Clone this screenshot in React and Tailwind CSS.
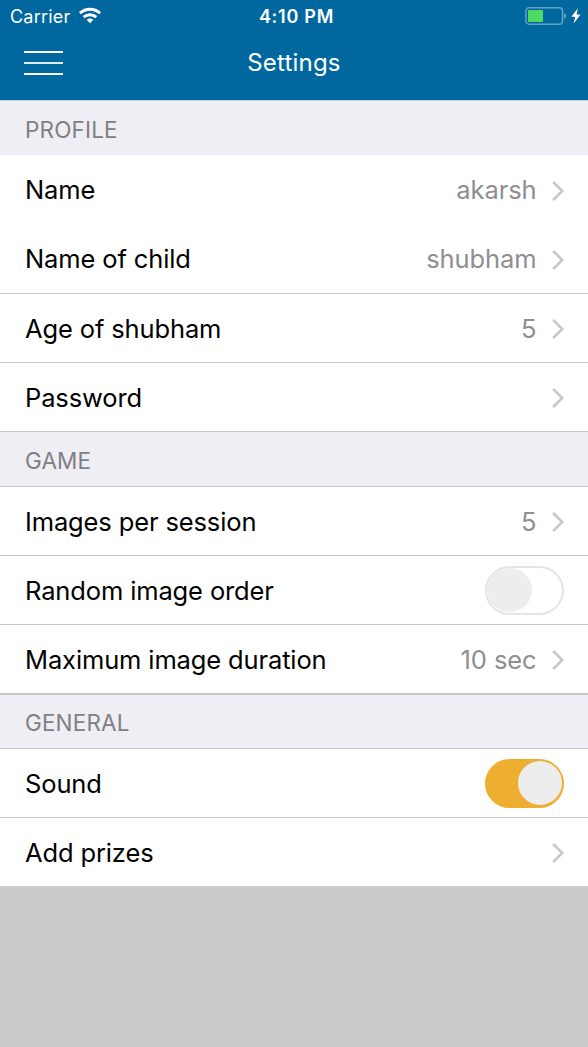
import React from "react";

function StatusBar() {
  return (
    <div className="grid h-8 grid-cols-3 items-center pl-[10px] pr-[7px] text-white">
      <div className="flex h-8 items-center gap-[9px]">
        <span className="pt-px text-[18px] leading-[31px] tracking-[0.2px]">Carrier</span>
        <svg className="-mt-px" width="22" height="17" viewBox="0 0 22 17" fill="none" stroke="#fff" strokeWidth="3">
          <path d="M1 6.2C6.5 0.9 15.5 0.9 21 6.2" />
          <path d="M4.7 10.2C8.2 6.9 13.8 6.9 17.3 10.2" />
          <path d="M7.7 12.8C9.6 11 12.4 11 14.3 12.8L11 16.2Z" fill="#fff" stroke="none" />
        </svg>
      </div>
      <span className="pt-px pl-[2px] text-center text-[18px] leading-[31px] font-semibold tracking-[0.75px]">4:10 PM</span>
      <div className="flex h-8 items-center justify-end gap-[4px]">
        <svg width="42" height="18" viewBox="0 0 42 18" fill="none">
          <rect x="0.9" y="0.7" width="36.6" height="16.6" rx="3.2" stroke="#66a4c7" strokeWidth="1.4" />
          <rect x="3" y="3" width="15" height="12" rx="0.8" fill="#4cd964" />
          <path d="M39 6C41.7 7.2 41.7 10.8 39 12Z" fill="#66a4c7" />
        </svg>
        <svg width="10" height="16" viewBox="0 0 10 16" fill="#fff">
          <path d="M6.8 0.3L0.4 8.8H4.2L2.6 15.5L9.6 6.4H5.6Z" />
        </svg>
      </div>
    </div>
  );
}

function NavBar() {
  return (
    <div className="grid h-[68px] grid-cols-3 text-white">
      <div className="pt-[19px] pl-6">
        <div className="flex w-[39px] flex-col gap-[9px]">
          <span className="h-[2px] bg-white" />
          <span className="h-[2px] bg-[#dfeaf2]" />
          <span className="h-[2px] bg-white" />
        </div>
      </div>
      <h1 className="pt-[15px] text-center text-[24px] leading-8 tracking-[0.2px]">Settings</h1>
    </div>
  );
}

function SectionHeader({ title, className = "" }) {
  return (
    <div className={`flex items-center bg-[#efeef4] pl-[25px] text-[22.5px] tracking-[0.15px] text-[#808084] ${className}`}>
      {title}
    </div>
  );
}

function Chevron() {
  return (
    <svg className="mt-px ml-[15.5px] shrink-0" width="12" height="20" viewBox="0 0 12 20" fill="none" stroke="#c7c7cc" strokeWidth="2.6">
      <path d="M1.2 1L10.2 10L1.2 19" />
    </svg>
  );
}

function Switch({ on = false }) {
  return (
    <div
      role="switch"
      aria-checked={on}
      className={`-mt-px flex h-[49px] w-[79px] items-center rounded-full ${on ? "justify-end bg-[#eeae30]" : "bg-white ring-2 ring-inset ring-[#e5e5e5]"} px-[2px]`}
    >
      <span className="size-[44.5px] rounded-full bg-[#ededed]" />
    </div>
  );
}

function Row({ label, value, className = "h-[69px] border-b pt-px", children }) {
  return (
    <div className={`flex items-center border-[#c8c7cc] bg-white pr-6 pl-[25px] ${className}`}>
      <span className="grow text-[25.5px] leading-8 tracking-[-0.13px] text-black">{label}</span>
      <span className="text-[25.5px] leading-8 tracking-[-0.1px] text-[#8e8e93]">{value}</span>
      {children ?? <Chevron />}
    </div>
  );
}

export default function App() {
  return (
    <div className="flex h-[1047px] w-[588px] flex-col overflow-hidden bg-[#cbcbcb] font-['Inter',sans-serif] whitespace-nowrap">
      <header className="h-[100px] bg-[#00689f]">
        <StatusBar />
        <NavBar />
      </header>
      <SectionHeader title="PROFILE" className="h-[55px] border-t border-[#c8c7cc] pt-[4px]" />
      <Row label="Name" value="akarsh" className="h-[70px]" />
      <Row label="Name of child" value="shubham" className="h-[69px] border-b" />
      <Row label="Age of shubham" value="5" />
      <Row label="Password" />
      <SectionHeader title="GAME" className="h-[55px] border-b border-[#c8c7cc] pt-[4px]" />
      <Row label="Images per session" value="5" />
      <Row label="Random image order">
        <Switch />
      </Row>
      <Row label="Maximum image duration" value="10 sec" />
      <SectionHeader title="GENERAL" className="h-[55px] border-y border-[#c8c7cc] pt-[3px]" />
      <Row label="Sound">
        <Switch on />
      </Row>
      <Row label="Add prizes" className="h-[68px] pt-px" />
    </div>
  );
}
